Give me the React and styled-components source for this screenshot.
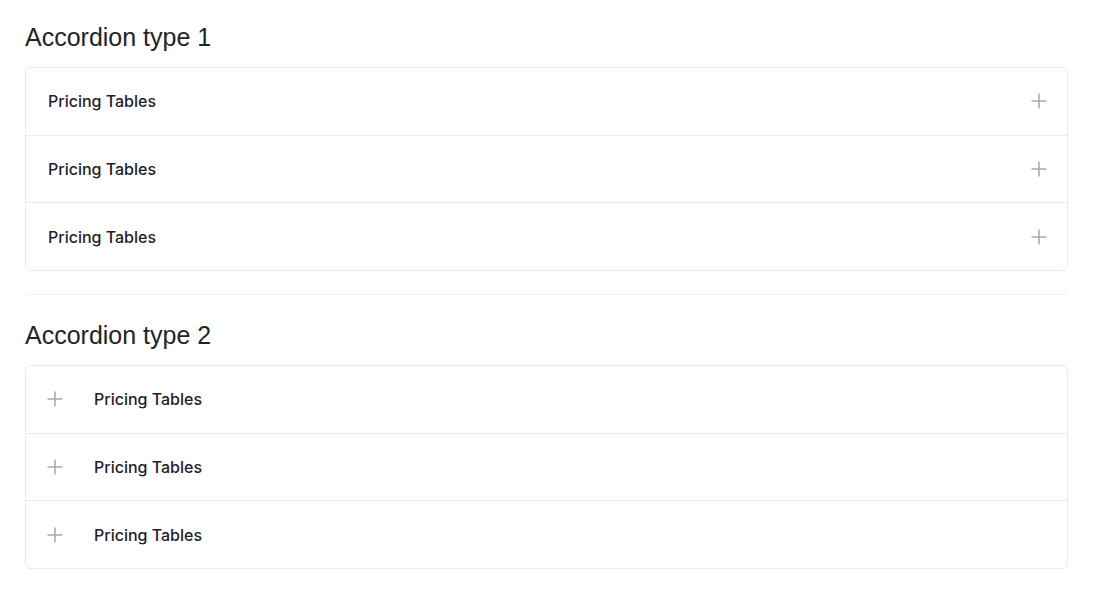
import React from "react";
import styled, { createGlobalStyle } from "styled-components";

const GlobalStyle = createGlobalStyle`
  html, body {
    margin: 0;
    padding: 0;
    background: #ffffff;
  }
`;

const Page = styled.div`
  padding: 22px 29px 20px 25px;
  display: flex;
  flex-direction: column;
`;

const Title = styled.h4`
  font-family: "Liberation Sans", Arial, sans-serif;
  font-weight: 400;
  font-size: 25px;
  line-height: 30px;
  color: #212529;
  margin: 0 0 ${(p) => p.$space || 15}px 0;
`;

const Card = styled.div`
  border: 1px solid #e9ebee;
  border-radius: 6px;
  background: #ffffff;
  display: flex;
  flex-direction: column;
`;

const Row = styled.div`
  display: flex;
  align-items: center;
  padding: 21.33px 20px 21.33px ${(p) => (p.$iconLeft ? 21 : 22)}px;
  gap: 31px;
  border-top: 1px solid #e9ebee;

  &:first-child {
    border-top: none;
  }
`;

const Label = styled.span`
  flex: 1;
  font-family: Inter, "Noto Sans", sans-serif;
  font-weight: 500;
  font-size: 16px;
  line-height: 24px;
  color: #1e2227;
`;

const Divider = styled.hr`
  border: none;
  border-top: 1px solid #f1f2f4;
  margin: 23px 0 25px 0;
`;

const PlusIcon = () => (
  <svg width="16" height="16" viewBox="0 0 16 16" fill="none">
    <path d="M8 0.5v15M0.5 8h15" stroke="#a6a9ad" strokeWidth="1.5" />
  </svg>
);

const items = ["Pricing Tables", "Pricing Tables", "Pricing Tables"];

function AccordionOne() {
  return (
    <Card>
      {items.map((t, i) => (
        <Row key={i}>
          <Label>{t}</Label>
          <PlusIcon />
        </Row>
      ))}
    </Card>
  );
}

function AccordionTwo() {
  return (
    <Card>
      {items.map((t, i) => (
        <Row key={i} $iconLeft>
          <PlusIcon />
          <Label>{t}</Label>
        </Row>
      ))}
    </Card>
  );
}

export default function App() {
  return (
    <>
      <GlobalStyle />
      <Page>
        <Title $space={15}>Accordion type 1</Title>
        <AccordionOne />
        <Divider />
        <Title $space={15}>Accordion type 2</Title>
        <AccordionTwo />
      </Page>
    </>
  );
}
